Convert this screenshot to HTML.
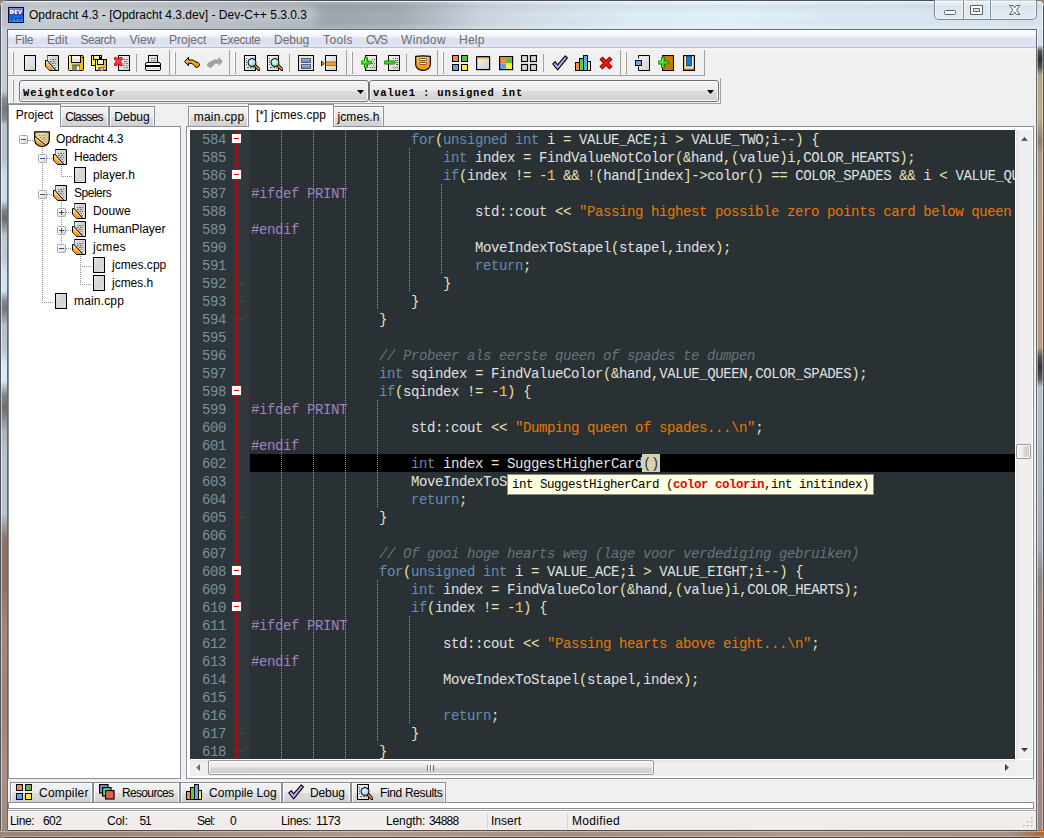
<!DOCTYPE html>
<html><head><meta charset="utf-8"><title>Dev-C++</title>
<style>
*{box-sizing:border-box;margin:0;padding:0}
html,body{width:1044px;height:838px;overflow:hidden}
body{position:relative;font-family:"Liberation Sans",sans-serif;font-size:12px;color:#000;background:#8e8078}
.a{position:absolute}
#frame{position:absolute;left:0;top:0;width:1044px;height:838px;border-radius:7px 7px 6px 6px;overflow:hidden;background:#a3a6aa}
#titlebar{position:absolute;left:0;top:0;width:1044px;height:30px;background:linear-gradient(180deg,rgba(255,255,255,.18) 0,rgba(255,255,255,.05) 3px,rgba(0,0,0,.05) 6px,rgba(0,0,0,0) 14px,rgba(0,0,0,.02) 22px,rgba(255,255,255,.12) 28px),linear-gradient(100deg,#bcc4cc 0%,#b4bcc4 9%,#a8b0b8 22%,#9fa7af 32%,#a4acb4 38%,#b6c0ca 42%,#cbd6e0 46%,#d5e1eb 52%,#dfedf7 61%,#e2f1fa 70%,#dce9f4 80%,#d9e5f0 100%)}
#tglow{left:22px;top:5px;width:296px;height:20px;border-radius:10px;background:rgba(255,255,255,.3);filter:blur(5px)}
#title{left:29px;top:7px;font-size:12px;line-height:16px;white-space:nowrap;color:#000;letter-spacing:0.01px}
#client{position:absolute;left:8px;top:30px;width:1028px;height:800px;background:#f0f0f0}
/* menu */
#menubar{left:0;top:0;width:1028px;height:18px;background:linear-gradient(180deg,#ffffff 0%,#f3f5fa 35%,#dfe3f1 50%,#dbe0ef 75%,#e3e7f4 100%);border-bottom:1px solid #b9bfd0}
#menubar span{position:absolute;top:3px;line-height:15px;color:#6d6d6d;font-size:12px;white-space:nowrap}

.combo{position:absolute;top:50px;width:350px;height:22px;border:1px solid #707070;border-radius:3px;background:linear-gradient(180deg,#f2f2f2 0%,#ebebeb 48%,#dddddd 52%,#cfcfcf 100%);box-shadow:inset 0 0 0 1px #fcfcfc;font-family:"Liberation Mono",monospace;font-weight:bold;font-size:10.500px;letter-spacing:.85px;line-height:21px;padding:2px 0 0 3px;white-space:nowrap;color:#000}
.combo i{position:absolute;right:4px;top:9px;width:7px;height:4px;background:#000;clip-path:polygon(0 0,100% 0,50% 100%)}

/* left */
#lpanel{background:#fff;border:1px solid #8b8f99}
.ltab{position:absolute;top:76px;height:21px;border:1px solid #8b8f99;border-bottom:none;background:linear-gradient(180deg,#f2f2f2 0%,#ebebeb 48%,#dddddd 52%,#cfcfcf 100%);box-shadow:inset 1px 1px 0 #fcfcfc,inset -1px 0 0 #fcfcfc;font-size:12px;line-height:21px;text-align:center;white-space:nowrap;color:#000}
.ltab.act{top:74px;height:23px;background:#fff;box-shadow:none;line-height:21px;z-index:2}
.ti{position:absolute}
.tt{position:absolute;font-size:12px;line-height:16px;white-space:nowrap;color:#000}
.bx{position:absolute;width:9px;height:9px;border:1px solid #a8a8a8;border-radius:1.5px;background:linear-gradient(135deg,#ffffff 0%,#f0f0f0 50%,#d0d0d0 100%)}
.bx b{position:absolute;left:1px;top:3px;width:5px;height:1px;background:#3a4aa0}
.bx u{position:absolute;left:3px;top:1px;width:1px;height:5px;background:#3a4aa0}
.hl{position:absolute;height:1px;background-image:linear-gradient(90deg,#909090 50%,transparent 50%);background-size:2px 1px}
.vl{position:absolute;width:1px;background-image:linear-gradient(180deg,#909090 50%,transparent 50%);background-size:1px 2px}

/* editor */
#epanel{background:#fff;border:1px solid #8b8f99}
.etab{position:absolute;top:76px;height:21px;border:1px solid #8b8f99;border-bottom:none;background:linear-gradient(180deg,#f2f2f2 0%,#ebebeb 48%,#dddddd 52%,#cfcfcf 100%);box-shadow:inset 1px 1px 0 #fcfcfc,inset -1px 0 0 #fcfcfc;font-size:12px;line-height:21px;text-align:center;white-space:nowrap;color:#000}
.etab.act{top:74px;height:23px;background:#fff;box-shadow:none;line-height:21px;z-index:2}
#ed{background:#293134;overflow:hidden;font-family:"Liberation Mono",monospace;font-size:14px;letter-spacing:-0.4px;color:#e0e2e4}
#gut1{position:absolute;left:0;top:0;width:44px;height:100%;background:#2d363b}
#gut2{position:absolute;left:44px;top:0;width:15px;height:100%;background:#31393f}
.cur{position:absolute;left:60px;width:765px;height:18px;background:#000}
.ig{position:absolute;width:1px;background-image:linear-gradient(180deg,#929ca1 50%,transparent 50%);background-size:1px 2px}
.fl{position:absolute;left:46px;top:0;width:1px;height:100%;background:#cc0000}
.fb{position:absolute;left:41px;width:11px;height:11px;border:1px solid #cc0000;background:#fff}
.fb b{position:absolute;left:2px;top:4px;width:5px;height:1px;background:#cc0000}
.ft{position:absolute;left:46px;width:7px;height:1px;background:#cc0000}
.ln{position:absolute;left:0;width:36px;height:18px;line-height:18px;padding-top:1px;text-align:right;color:#7a919c;white-space:pre}
.cl{position:absolute;height:18px;line-height:18px;padding-top:1px;white-space:pre}
.k{color:#678cb1}.s{color:#e8e2b7}.n{color:#ffcd22}.q{color:#ec7600}.c{color:#66747b;font-style:italic}.p{color:#a082bd}
.br{background:#d6d2ae;color:#2a3844;display:inline-block;height:18px;margin:-1px -1px 0 -1px;padding:1px 1px 0 1px;vertical-align:top}
#tip{position:absolute;left:317px;top:344px;width:367px;height:21px;background:#ffffe1;border:1px solid #8c8c84;color:#000;font-size:12.500px;letter-spacing:-0.5px;line-height:20px;padding-left:4px;white-space:pre}
#tip b{color:#f00000;font-weight:bold}

/* scrollbars */
#vs{background:linear-gradient(90deg,#e3e3e3 0%,#eeeeee 20%,#f0f0f0 50%,#efefef 100%)}
#hs{background:linear-gradient(180deg,#e3e3e3 0%,#eeeeee 20%,#f0f0f0 50%,#efefef 100%)}
#vs i,#hs i{position:absolute;width:0;height:0}
.up{left:5px;top:7px;width:7px!important;height:4px!important;background:linear-gradient(180deg,#303030,#707070);clip-path:polygon(50% 0,100% 100%,0 100%)}
.dn{left:5px;bottom:7px;width:7px!important;height:4px!important;background:linear-gradient(180deg,#303030,#707070);clip-path:polygon(0 0,100% 0,50% 100%)}
.lf{left:6px;top:4px;width:4px!important;height:7px!important;background:linear-gradient(90deg,#909090,#606060);clip-path:polygon(100% 0,100% 100%,0 50%)}
.rt{right:6px;top:4px;width:4px!important;height:7px!important;background:linear-gradient(90deg,#303030,#707070);clip-path:polygon(0 0,100% 50%,0 100%)}
.vth{position:absolute;left:0;width:15px;height:15px;border:1px solid #979797;border-radius:2px;background:linear-gradient(90deg,#f6f6f6 0%,#e9e9e9 48%,#d8d8d8 52%,#cdcdcd 100%);box-shadow:inset 0 0 0 1px #fafafa}
.hth{position:absolute;top:0;height:15px;border:1px solid #979797;border-radius:2px;background:linear-gradient(180deg,#f6f6f6 0%,#e9e9e9 48%,#d8d8d8 52%,#cdcdcd 100%);box-shadow:inset 0 0 0 1px #fafafa}
.hth b{position:absolute;left:218px;top:4px;width:7px;height:6px;background:linear-gradient(90deg,#707070 0 1px,#fff 1px 2px,transparent 2px 3px,#707070 3px 4px,#fff 4px 5px,transparent 5px 6px,#707070 6px 7px)}
/* bottom */
.btab{position:absolute;top:752px;height:21px;border:1px solid #8b8f99;border-bottom:none;background:linear-gradient(180deg,#f2f2f2 0%,#ebebeb 48%,#dddddd 52%,#cfcfcf 100%);box-shadow:inset 1px 1px 0 #fcfcfc,inset -1px 0 0 #fcfcfc;font-size:12px;white-space:nowrap}
.btab svg{position:absolute;top:1px;width:16px;height:16px}
.btab span{position:absolute;top:2px;line-height:16px}
#status{background:#f1edec;border-top:1px solid #b0adab;box-shadow:inset 0 1px 0 #fbfafa}
#status span{position:absolute;top:2px;line-height:16px;font-size:12px;white-space:nowrap}
#status i{position:absolute;top:2px;width:1px;height:16px;background:#d6d2d0}

/* frame */
#fl{left:0;top:29px;width:8px;height:809px;background:linear-gradient(180deg,#c4ced8 0px,#c4ced8 62px,#8a8e92 70px,#74787c 80px,#8a8e92 90px,#b8c4ce 96px,#b8c4ce 130px,#c8dcea 145px,#c8dcea 172px,#7a7e82 182px,#6a6e72 190px,#9a9ea2 200px,#bcc8d2 206px,#c0ccd6 230px,#cfe4f2 245px,#cfe4f2 262px,#84888c 272px,#74787c 280px,#9aa0a6 290px,#b4c0ca 296px,#b8c6d0 320px,#d4ecf8 335px,#d4ecf8 352px,#84868a 366px,#70706e 378px,#8a8a8a 390px,#a8b0b8 400px,#b8c4cc 425px,#b8c6ce 485px,#a09a96 498px,#8c766a 510px,#8c766a 560px,#a08a7e 600px,#9a8478 680px,#a89084 740px,#a08a7e 809px);box-shadow:inset 1px 0 0 #50545a,inset 2px 0 0 rgba(255,255,255,.55)}
#fr{left:1036px;top:29px;width:8px;height:809px;background:linear-gradient(180deg,#d4e2ee 0px,#d4e2ee 16px,#50545a 22px,#2a2c30 30px,#50504c 38px,#b8a484 46px,#c0aa88 90px,#907868 112px,#b09680 125px,#b89c84 200px,#b89c84 318px,#5a504c 328px,#383434 338px,#5a5a5c 350px,#b4c0ca 358px,#b0bac4 420px,#a4acb4 520px,#8c8480 550px,#a08678 575px,#a88c7e 700px,#a08678 809px);box-shadow:inset -1px 0 0 #50545a,inset -2px 0 0 rgba(255,255,255,.45),inset 2px 0 0 rgba(255,255,255,.5)}
#fbm{left:0;top:830px;width:1044px;height:8px;background:linear-gradient(180deg,transparent 0,transparent 1px,rgba(255,255,255,.38) 1px,rgba(255,255,255,.38) 2px,transparent 2px,transparent 6px,rgba(255,255,255,.3) 6px,rgba(255,255,255,.3) 7px,#4a4040 7px),linear-gradient(90deg,#9a8478 0%,#a08a7e 12%,#b09a8c 36%,#a48e82 55%,#b09888 75%,#a89084 97%,#a87850 99%,#b06830 100%)}
#capbtn{left:934px;top:0;width:103px;height:20px;border:1px solid #7a8a9a;border-top:none;border-radius:0 0 5px 5px;background:linear-gradient(180deg,rgba(255,255,255,.35),rgba(255,255,255,.12));box-shadow:inset 0 0 0 1px rgba(255,255,255,.55)}
#capbtn i{position:absolute;top:0;width:1px;height:19px;background:#7a8a9a;box-shadow:1px 0 0 rgba(255,255,255,.6),-1px 0 0 rgba(255,255,255,.6)}
/* toolbars */
.tb{position:absolute;top:20px;height:26px;border-right:1px solid #a0a0a0;border-bottom:1px solid #a0a0a0}
.grip{position:absolute;top:2px;width:2px;height:22px;border-right:1px solid #a0a0a0;border-left:1px solid #fff;border-bottom:1px solid #a0a0a0}
.sep{position:absolute;top:4px;width:1px;height:18px;background:#a0a0a0}
.ic{position:absolute;top:25px;width:16px;height:16px}
</style></head><body>
<div id="frame">
<div id="titlebar"></div>
<div id="tglow" class="a"></div>
<div id="title" class="a">Opdracht 4.3 - [Opdracht 4.3.dev] - Dev-C++ 5.3.0.3</div>
<div id="client">
<div id="menubar" class="a">
<span style="left:7px;letter-spacing:-.3px">File</span><span style="left:39px;letter-spacing:.07px">Edit</span><span style="left:72.500px;letter-spacing:-.5px">Search</span><span style="left:121.500px;letter-spacing:.07px">View</span><span style="left:161px">Project</span><span style="left:212px;letter-spacing:-.43px">Execute</span><span style="left:266px;letter-spacing:-.04px">Debug</span><span style="left:315px;letter-spacing:.4px">Tools</span><span style="left:358px;letter-spacing:-1.350px">CVS</span><span style="left:393px;letter-spacing:.38px">Window</span><span style="left:451px;letter-spacing:.24px">Help</span>
</div>

<svg width="0" height="0" style="position:absolute"><defs>
<linearGradient id="gp" x1="0" y1="0" x2="1" y2="1"><stop offset="0" stop-color="#f4f4f4"/><stop offset="1" stop-color="#cfcfcf"/></linearGradient>
<linearGradient id="gy" x1="0" y1="0" x2="1" y2="0"><stop offset="0" stop-color="#fff27a"/><stop offset=".5" stop-color="#ffd800"/><stop offset="1" stop-color="#e8b800"/></linearGradient>
<linearGradient id="gb" x1="0" y1="0" x2="0" y2="1"><stop offset="0" stop-color="#9cc4f8"/><stop offset="1" stop-color="#3f7fe0"/></linearGradient>
<linearGradient id="go" x1="0" y1="0" x2="0" y2="1"><stop offset="0" stop-color="#ffc860"/><stop offset="1" stop-color="#f08a00"/></linearGradient>
<radialGradient id="gl1" cx=".4" cy=".4" r=".7"><stop offset="0" stop-color="#e8f8ff"/><stop offset="1" stop-color="#7cc4e8"/></radialGradient>
<radialGradient id="gl2" cx=".4" cy=".4" r=".7"><stop offset="0" stop-color="#e8fff4"/><stop offset="1" stop-color="#6cd8a8"/></radialGradient>
<linearGradient id="gp2" x1="0" y1="0" x2="1" y2="1"><stop offset="0" stop-color="#e8e8e8"/><stop offset=".5" stop-color="#d4d4d4"/><stop offset="1" stop-color="#e0e0e0"/></linearGradient><linearGradient id="gfo" x1="0" y1="0" x2=".6" y2="1"><stop offset="0" stop-color="#ffdc80"/><stop offset=".5" stop-color="#ffb020"/><stop offset="1" stop-color="#f08800"/></linearGradient><linearGradient id="gp3" x1="0" y1="0" x2="1" y2="1"><stop offset="0" stop-color="#ececec"/><stop offset=".5" stop-color="#cacaca"/><stop offset="1" stop-color="#e0e0e0"/></linearGradient><linearGradient id="gtan" x1="0" y1="0" x2="1" y2="0"><stop offset="0" stop-color="#e0c48c"/><stop offset=".5" stop-color="#f0dcb0"/><stop offset="1" stop-color="#d8b880"/></linearGradient><linearGradient id="gp2" x1="0" y1="0" x2="1" y2="1"><stop offset="0" stop-color="#e8e8e8"/><stop offset=".5" stop-color="#d4d4d4"/><stop offset="1" stop-color="#e0e0e0"/></linearGradient></defs></svg>
<div id="tbline" class="a" style="left:0;top:19px;width:1028px;height:1px;background:#fbfbfb"></div>
<div class="tb" style="left:0;width:162px"><div class="grip" style="left:4px"></div><div class="sep" style="left:128px"></div></div>
<div class="tb" style="left:162px;width:60px"><div class="grip" style="left:4px"></div></div>
<div class="tb" style="left:222px;width:117px"><div class="grip" style="left:4px"></div><div class="sep" style="left:59px"></div></div>
<div class="tb" style="left:339px;width:91px"><div class="grip" style="left:4px"></div><div class="sep" style="left:59px"></div></div>
<div class="tb" style="left:430px;width:183px"><div class="grip" style="left:4px"></div><div class="sep" style="left:105px"></div></div>
<div class="tb" style="left:613px;width:84px"><div class="grip" style="left:4px"></div></div>
<!-- new -->
<svg class="ic" style="left:16px" viewBox="0 0 16 16"><rect x=".5" y=".5" width="11" height="15" fill="url(#gp)" stroke="#000"/></svg>
<!-- open -->
<svg class="ic" style="left:36px" viewBox="0 0 16 16"><path d="M3.500 6V.5H14.500V15.500H11" fill="url(#gp3)" stroke="#000"/><path d="M3.500 .5V6.500L12 15.500H11Z" fill="url(#gp3)"/><path d="M1.500 5.500H3.200L12 15.500H5.500L4.500 14.500L3.500 13.500L2.500 12.500L1.500 11Z" fill="url(#gfo)" stroke="#000" stroke-width="1" stroke-linejoin="miter"/><path d="M2.600 7.200L10 15" stroke="#fff" stroke-width=".8" opacity=".85"/><g fill="#707070"><rect x="6" y="4" width="1" height="1"/><rect x="8" y="4" width="2" height="1"/><rect x="11" y="4" width="1" height="1"/><rect x="6" y="6" width="2" height="1"/><rect x="9" y="6" width="2" height="1"/><rect x="8" y="8" width="2" height="1"/><rect x="11" y="8" width="1" height="1"/><rect x="10" y="10" width="1" height="1"/><rect x="11" y="12" width="1" height="1"/></g></svg>
<!-- save -->
<svg class="ic" style="left:60px" viewBox="0 0 16 16"><rect x=".5" y=".5" width="15" height="15" fill="url(#gy)" stroke="#000" rx="1"/><rect x="3.5" y=".5" width="9" height="7" fill="#e6e6e6" stroke="#000"/><rect x="4" y="1" width="8" height="3" fill="#f4f4f4"/><rect x="4" y="10" width="8" height="5.5" fill="#808080"/><rect x="4" y="9.5" width="8" height="1" fill="#5a5a5a"/><rect x="9" y="11.5" width="2" height="3.5" fill="#fff"/><rect x="14" y="2" width="1" height="1" fill="#000"/></svg>
<!-- save all -->
<svg class="ic" style="left:83px" viewBox="0 0 16 16"><rect x=".5" y=".5" width="10" height="10" fill="url(#gy)" stroke="#000"/><rect x="2.5" y=".5" width="6" height="4" fill="#e6e6e6" stroke="#000"/><rect x="4.5" y="4.5" width="11" height="11" fill="url(#gy)" stroke="#000"/><rect x="6.5" y="4.5" width="6" height="5" fill="#ececec" stroke="#000"/><rect x="7" y="12" width="6" height="3.5" fill="#808080"/><rect x="10" y="13" width="2" height="2.5" fill="#c8c8c8"/><rect x="8" y="2" width="2" height="2.5" fill="#000"/></svg>
<!-- close -->
<svg class="ic" style="left:106px" viewBox="0 0 16 16"><rect x="4.500" y=".5" width="11" height="15" fill="url(#gp)" stroke="#000"/><g fill="#777"><rect x="9" y="4" width="2" height="1"/><rect x="12" y="4" width="2" height="1"/><rect x="10" y="6" width="3" height="1"/><rect x="10" y="8" width="1" height="1"/><rect x="12" y="8" width="2" height="1"/><rect x="9" y="10" width="2" height="1"/><rect x="12" y="10" width="1" height="1"/><rect x="10" y="12" width="1" height="1"/><rect x="12" y="12" width="2" height="1"/></g><path d="M1.500 3.500L7 9.500M7 3.500L1.500 9.500" stroke="#e81010" stroke-width="3.400" stroke-linecap="round"/><path d="M1.800 3.800L6.700 9.200M6.700 3.800L1.800 9.200" stroke="#ff5858" stroke-width="1.200" stroke-linecap="round"/></svg>
<!-- print -->
<svg class="ic" style="left:137px" viewBox="0 0 16 16"><rect x="3.500" y=".5" width="9" height="7" fill="url(#gp)" stroke="#000"/><g fill="#777"><rect x="6" y="3" width="2" height="1"/><rect x="9" y="3" width="2" height="1"/><rect x="6" y="5" width="1" height="1"/><rect x="8" y="5" width="2" height="1"/></g><rect x=".500" y="7.500" width="15" height="8" rx="1.500" fill="#fff" stroke="#000"/><rect x="1" y="10" width="14" height="2" fill="#000"/><rect x="2" y="13" width="12" height="1" fill="#d0d0d0"/></svg>
<!-- undo -->
<svg class="ic" style="left:176px" viewBox="0 0 16 16"><path d="M.6 6.500L4.500 2.200V5H9L11 6.500L14 7.500L15.600 9V10.500L13.500 12.300H12L9.500 10L8 8.300H4.500V10.800Z" fill="url(#go)" stroke="#000" stroke-width="1" stroke-linejoin="round"/></svg>
<!-- redo -->
<svg class="ic" style="left:199px" viewBox="0 0 16 16"><path d="M15.800 6.500L11.500 1.700V4.600H7L5 6L2 7L0 9V10.800L2.500 12.800H4.300L6.800 10.300L8 8.700H11.500V11.300Z" fill="#a2a2a2"/></svg>
<!-- find -->
<svg class="ic" style="left:236px" viewBox="0 0 16 16"><rect x=".5" y=".5" width="11" height="15" fill="url(#gp)" stroke="#000"/><g fill="#666"><rect x="2" y="3" width="1" height="1"/><rect x="2" y="5" width="1" height="1"/><rect x="2" y="7" width="1" height="1"/><rect x="2" y="9" width="1" height="1"/><rect x="3" y="12" width="2" height="1"/><rect x="6" y="12" width="2" height="1"/><rect x="9" y="12" width="1" height="1"/></g><path d="M11 10.500L15 14.500" stroke="#000" stroke-width="3.200" stroke-linecap="round"/><path d="M11.200 10.700L14.800 14.300" stroke="#f0a030" stroke-width="1.600" stroke-linecap="round"/><circle cx="8" cy="7.500" r="4" fill="url(#gl1)" stroke="#000"/></svg>
<!-- replace -->
<svg class="ic" style="left:259px" viewBox="0 0 16 16"><rect x=".5" y=".5" width="11" height="15" fill="url(#gp)" stroke="#000"/><g fill="#666"><rect x="2" y="3" width="1" height="1"/><rect x="2" y="5" width="1" height="1"/><rect x="2" y="7" width="1" height="1"/><rect x="2" y="9" width="1" height="1"/><rect x="3" y="12" width="2" height="1"/><rect x="6" y="12" width="2" height="1"/><rect x="9" y="12" width="1" height="1"/></g><path d="M11 10.500L15 14.500" stroke="#000" stroke-width="3.200" stroke-linecap="round"/><path d="M11.200 10.700L14.800 14.300" stroke="#f0a030" stroke-width="1.600" stroke-linecap="round"/><circle cx="8" cy="7.500" r="4" fill="url(#gl2)" stroke="#000"/></svg>
<!-- toggle -->
<svg class="ic" style="left:290px" viewBox="0 0 16 16"><rect x=".5" y=".5" width="15" height="15" fill="#e4e4e4" stroke="#000"/><rect x="3.500" y="3.500" width="9" height="4" fill="url(#gb)" stroke="#606060"/><rect x="3.500" y="9.500" width="9" height="4" fill="url(#gb)" stroke="#606060"/></svg>
<!-- goto -->
<svg class="ic" style="left:313px" viewBox="0 0 16 16"><rect x="4.500" y=".5" width="11" height="15" fill="url(#gp)" stroke="#000"/><rect x="5" y="7" width="10" height="3" fill="#f0a010"/><rect x="5" y="6.500" width="10" height=".7" fill="#7a5200"/><rect x="5" y="10" width="10" height=".7" fill="#7a5200"/><path d="M.5 6L3.200 8.500L.5 11Z" fill="#f0a010" stroke="#000" stroke-width=".8"/></svg>
<!-- add -->
<svg class="ic" style="left:353px" viewBox="0 0 16 16"><rect x="4.500" y=".5" width="11" height="15" fill="url(#gp)" stroke="#000"/><g fill="#666"><rect x="11" y="4" width="1" height="1"/><rect x="13" y="4" width="1" height="1"/><rect x="12" y="6" width="1" height="1"/><rect x="11" y="8" width="1" height="1"/><rect x="13" y="8" width="1" height="1"/><rect x="12" y="10" width="1" height="1"/><rect x="9" y="12" width="1" height="1"/><rect x="11" y="12" width="1" height="1"/><rect x="13" y="12" width="1" height="1"/></g><path d="M5 3.500V11.500M1 7.500H9" stroke="#1a6a00" stroke-width="4" stroke-linecap="round"/><path d="M5 3.500V11.500M1 7.500H9" stroke="#38d818" stroke-width="2.400" stroke-linecap="round"/><path d="M4.500 4V7H2" stroke="#b8ffa0" stroke-width=".8" fill="none"/></svg>
<!-- remove -->
<svg class="ic" style="left:376px" viewBox="0 0 16 16"><rect x="4.500" y=".5" width="11" height="15" fill="url(#gp)" stroke="#000"/><g fill="#666"><rect x="9" y="3" width="1" height="1"/><rect x="11" y="3" width="1" height="1"/><rect x="13" y="3" width="1" height="1"/><rect x="11" y="5" width="3" height="1"/><rect x="12" y="7" width="2" height="1"/><rect x="12" y="9" width="2" height="1"/><rect x="9" y="12" width="1" height="1"/><rect x="11" y="12" width="1" height="1"/><rect x="13" y="12" width="1" height="1"/></g><path d="M1.500 7.500H9.500" stroke="#1a6a00" stroke-width="4" stroke-linecap="round"/><path d="M1.500 7.500H9.500" stroke="#38d818" stroke-width="2.400" stroke-linecap="round"/></svg>
<!-- orange shield -->
<svg class="ic" style="left:407px" viewBox="0 0 16 16"><path d="M.7 1.400Q8 .2 15.300 1.400V9.500C15.300 13 12 15.400 8 15.400C4 15.400 .7 13 .7 9.500Z" fill="url(#go)" stroke="#000" stroke-width="1.200"/><rect x="4.500" y="3.500" width="7" height="2" rx="1" fill="#fff" stroke="#3a2400" stroke-width=".7"/><rect x="4.500" y="7.500" width="7" height="2" rx="1" fill="#fff" stroke="#3a2400" stroke-width=".7"/></svg>
<!-- compile -->
<svg class="ic" style="left:444px" viewBox="0 0 16 16"><rect x=".5" y=".5" width="6" height="6" fill="#f88840" stroke="#000"/><rect x="9.500" y=".5" width="6" height="6" fill="#58c040" stroke="#000"/><rect x=".5" y="9.500" width="6" height="6" fill="#58a0f0" stroke="#000"/><rect x="9.500" y="9.500" width="6" height="6" fill="#f8f040" stroke="#000"/></svg>
<!-- run -->
<svg class="ic" style="left:468px" viewBox="0 0 16 16"><rect x=".6" y="1.600" width="13" height="13" fill="url(#gp)" stroke="#000" stroke-width="1.200"/><rect x="1" y="2" width="12" height="1.500" fill="#f09000"/></svg>
<!-- compile+run -->
<svg class="ic" style="left:491px" viewBox="0 0 16 16"><rect x="1" y="3" width="6" height="5.500" fill="#f88840"/><rect x="7" y="3" width="6" height="5.500" fill="#58c040"/><rect x="1" y="8.500" width="6" height="5.500" fill="#58a0f0"/><rect x="7" y="8.500" width="6" height="5.500" fill="#f8f040"/><rect x=".6" y="1.600" width="13" height="13" fill="none" stroke="#000" stroke-width="1.200"/><rect x="1" y="2" width="12" height="1.500" fill="#f09000"/></svg>
<!-- rebuild -->
<svg class="ic" style="left:513px" viewBox="0 0 16 16"><rect x=".5" y=".5" width="6" height="6" fill="#d8d8d8" stroke="#000" stroke-width="1.200"/><rect x="9.500" y=".5" width="6" height="6" fill="#d8d8d8" stroke="#000" stroke-width="1.200"/><rect x=".5" y="9.500" width="6" height="6" fill="#d8d8d8" stroke="#000" stroke-width="1.200"/><rect x="9.500" y="9.500" width="6" height="6" fill="#d8d8d8" stroke="#000" stroke-width="1.200"/></svg>
<!-- check -->
<svg class="ic" style="left:544px" viewBox="0 0 16 16"><path d="M.8 9L3.200 6.600L5.600 9.800L13.300 .8L15.400 2.800L5.700 14.800Z" fill="#c8a0ff" stroke="#000" stroke-width="1.100" stroke-linejoin="round"/></svg>
<!-- bars -->
<svg class="ic" style="left:567px" viewBox="0 0 16 16"><rect x=".5" y="7.500" width="4" height="8" fill="#f89040" stroke="#000"/><rect x="4.500" y="3.500" width="4" height="12" fill="#60c848" stroke="#000"/><rect x="8.500" y=".5" width="4" height="15" fill="#60a8f8" stroke="#000"/><rect x="12.500" y="6.500" width="3" height="9" fill="#f8f050" stroke="#000"/></svg>
<!-- red x -->
<svg class="ic" style="left:590px" viewBox="0 0 16 16"><path d="M4.500 4.500L11.500 11.500M11.500 4.500L4.500 11.500" stroke="#600000" stroke-width="4.400" stroke-linecap="square"/><path d="M4.500 4.500L11.500 11.500M11.500 4.500L4.500 11.500" stroke="#f01010" stroke-width="3" stroke-linecap="square"/></svg>
<!-- goto func -->
<svg class="ic" style="left:627px" viewBox="0 0 16 16"><path d="M3.500 3.500V.5H14.500V15.500H3.500V11.500" fill="url(#gp)" stroke="#000"/><rect x=".5" y="5.500" width="6" height="5" fill="#68a8f0" stroke="#000"/></svg>
<!-- add watch -->
<svg class="ic" style="left:650px" viewBox="0 0 16 16"><rect x="4.500" y=".5" width="11" height="15" fill="#c87808" stroke="#000"/><path d="M5 3.500V11.500M1 7.500H9" stroke="#1a6a00" stroke-width="4" stroke-linecap="round"/><path d="M5 3.500V11.500M1 7.500H9" stroke="#38d818" stroke-width="2.400" stroke-linecap="round"/><path d="M4.500 4V7H2" stroke="#b8ffa0" stroke-width=".8" fill="none"/></svg>
<!-- bookmark -->
<svg class="ic" style="left:675px" viewBox="0 0 16 16"><rect x=".5" y=".5" width="11" height="15" fill="#c87808" stroke="#000"/><path d="M1.500 1.500H10.500V13.500H1.500Z" fill="#f0f0f0"/><rect x="3.500" y="1" width="5" height="10" fill="#1878c8" stroke="#0a3a78" stroke-width=".8"/></svg>


<div class="a" style="left:0;top:73px;width:713px;height:1px;background:#a0a0a0"></div>
<div class="a" style="left:712px;top:48px;width:1px;height:26px;background:#a0a0a0"></div>
<div class="grip" style="left:4px;top:50px;height:22px"></div>
<div class="combo" style="left:11px">WeightedColor<i></i></div>
<div class="combo" style="left:361px">value1 : unsigned int<i></i></div>

<div class="ltab" style="left:52px;width:49px;letter-spacing:-.73px;padding-right:1px">Classes</div>
<div class="ltab" style="left:101px;width:46px">Debug</div>
<div id="lpanel" class="a" style="left:0px;top:96px;width:173px;height:653px"></div>
<div class="ltab act" style="left:0px;width:53px">Project</div>
<div class="bx" style="left:11px;top:105px"><b></b></div>
<div class="hl" style="left:20px;top:110px;width:6px"></div>
<svg class="ti" style="left:26px;top:101px" width="16" height="16" viewBox="0 0 16 16"><path d="M.7 .8H15.300V9C15.300 12.500 12 15.300 8 15.300C4 15.300 .7 12.500 .7 9Z" fill="url(#gtan)" stroke="#000" stroke-width="1.200" stroke-linejoin="round"/><path d="M1.200 6L11 14Q8 15.300 5 14Q1.500 12 1.200 6Z" fill="url(#gfo)"/><path d="M1 5.500L11.500 14" stroke="#000" stroke-width="1"/><path d="M1.500 7.500L10 14.300" stroke="#fff" stroke-width=".7" opacity=".85"/><g fill="#a08860"><rect x="5" y="4" width="1" height="1"/><rect x="7" y="4" width="2" height="1"/><rect x="10" y="4" width="1" height="1"/><rect x="6" y="6" width="2" height="1"/><rect x="9" y="6" width="2" height="1"/><rect x="8" y="8" width="2" height="1"/><rect x="11" y="8" width="1" height="1"/><rect x="10" y="10" width="1" height="1"/></g></svg>
<div class="tt" style="left:48.0px;top:101px;letter-spacing:-0.18px">Opdracht 4.3</div>
<div class="vl" style="left:34px;top:118px;height:154px"></div>
<div class="bx" style="left:30px;top:124px"><b></b></div>
<div class="hl" style="left:39px;top:128px;width:6px"></div>
<svg class="ti" style="left:44px;top:119px" width="16" height="16" viewBox="0 0 16 16"><path d="M3.500 6V.5H14.500V15.500H11" fill="url(#gp3)" stroke="#000"/><path d="M3.500 .5V6.500L12 15.500H11Z" fill="url(#gp3)"/><path d="M1.500 5.500H3.200L12 15.500H5.500L4.500 14.500L3.500 13.500L2.500 12.500L1.500 11Z" fill="url(#gfo)" stroke="#000" stroke-width="1" stroke-linejoin="miter"/><path d="M2.600 7.200L10 15" stroke="#fff" stroke-width=".8" opacity=".85"/><g fill="#707070"><rect x="6" y="4" width="1" height="1"/><rect x="8" y="4" width="2" height="1"/><rect x="11" y="4" width="1" height="1"/><rect x="6" y="6" width="2" height="1"/><rect x="9" y="6" width="2" height="1"/><rect x="8" y="8" width="2" height="1"/><rect x="11" y="8" width="1" height="1"/><rect x="10" y="10" width="1" height="1"/><rect x="11" y="12" width="1" height="1"/></g></svg>
<div class="tt" style="left:66.0px;top:119px;letter-spacing:-0.29px">Headers</div>
<div class="vl" style="left:53px;top:136px;height:10px"></div>
<div class="hl" style="left:53px;top:146px;width:12px"></div>
<svg class="ti" style="left:66px;top:137px" width="12" height="16" viewBox="0 0 12 16"><rect x=".5" y=".5" width="11" height="15" fill="url(#gp2)" stroke="#000"/></svg>
<div class="tt" style="left:85.0px;top:137px;letter-spacing:-0.02px">player.h</div>
<div class="bx" style="left:30px;top:160px"><b></b></div>
<div class="hl" style="left:39px;top:164px;width:6px"></div>
<svg class="ti" style="left:44px;top:155px" width="16" height="16" viewBox="0 0 16 16"><path d="M3.500 6V.5H14.500V15.500H11" fill="url(#gp3)" stroke="#000"/><path d="M3.500 .5V6.500L12 15.500H11Z" fill="url(#gp3)"/><path d="M1.500 5.500H3.200L12 15.500H5.500L4.500 14.500L3.500 13.500L2.500 12.500L1.500 11Z" fill="url(#gfo)" stroke="#000" stroke-width="1" stroke-linejoin="miter"/><path d="M2.600 7.200L10 15" stroke="#fff" stroke-width=".8" opacity=".85"/><g fill="#707070"><rect x="6" y="4" width="1" height="1"/><rect x="8" y="4" width="2" height="1"/><rect x="11" y="4" width="1" height="1"/><rect x="6" y="6" width="2" height="1"/><rect x="9" y="6" width="2" height="1"/><rect x="8" y="8" width="2" height="1"/><rect x="11" y="8" width="1" height="1"/><rect x="10" y="10" width="1" height="1"/><rect x="11" y="12" width="1" height="1"/></g></svg>
<div class="tt" style="left:66.0px;top:155px;letter-spacing:-0.48px">Spelers</div>
<div class="vl" style="left:53px;top:172px;height:42px"></div>
<div class="bx" style="left:49px;top:178px"><b></b><u></u></div>
<div class="hl" style="left:58px;top:182px;width:6px"></div>
<svg class="ti" style="left:63px;top:173px" width="16" height="16" viewBox="0 0 16 16"><path d="M3.500 6V.5H14.500V15.500H11" fill="url(#gp3)" stroke="#000"/><path d="M3.500 .5V6.500L12 15.500H11Z" fill="url(#gp3)"/><path d="M1.500 5.500H3.200L12 15.500H5.500L4.500 14.500L3.500 13.500L2.500 12.500L1.500 11Z" fill="url(#gfo)" stroke="#000" stroke-width="1" stroke-linejoin="miter"/><path d="M2.600 7.200L10 15" stroke="#fff" stroke-width=".8" opacity=".85"/><g fill="#707070"><rect x="6" y="4" width="1" height="1"/><rect x="8" y="4" width="2" height="1"/><rect x="11" y="4" width="1" height="1"/><rect x="6" y="6" width="2" height="1"/><rect x="9" y="6" width="2" height="1"/><rect x="8" y="8" width="2" height="1"/><rect x="11" y="8" width="1" height="1"/><rect x="10" y="10" width="1" height="1"/><rect x="11" y="12" width="1" height="1"/></g></svg>
<div class="tt" style="left:85.0px;top:173px;letter-spacing:0.06px">Douwe</div>
<div class="bx" style="left:49px;top:196px"><b></b><u></u></div>
<div class="hl" style="left:58px;top:200px;width:6px"></div>
<svg class="ti" style="left:63px;top:191px" width="16" height="16" viewBox="0 0 16 16"><path d="M3.500 6V.5H14.500V15.500H11" fill="url(#gp3)" stroke="#000"/><path d="M3.500 .5V6.500L12 15.500H11Z" fill="url(#gp3)"/><path d="M1.500 5.500H3.200L12 15.500H5.500L4.500 14.500L3.500 13.500L2.500 12.500L1.500 11Z" fill="url(#gfo)" stroke="#000" stroke-width="1" stroke-linejoin="miter"/><path d="M2.600 7.200L10 15" stroke="#fff" stroke-width=".8" opacity=".85"/><g fill="#707070"><rect x="6" y="4" width="1" height="1"/><rect x="8" y="4" width="2" height="1"/><rect x="11" y="4" width="1" height="1"/><rect x="6" y="6" width="2" height="1"/><rect x="9" y="6" width="2" height="1"/><rect x="8" y="8" width="2" height="1"/><rect x="11" y="8" width="1" height="1"/><rect x="10" y="10" width="1" height="1"/><rect x="11" y="12" width="1" height="1"/></g></svg>
<div class="tt" style="left:85.0px;top:191px;letter-spacing:-0.02px">HumanPlayer</div>
<div class="bx" style="left:49px;top:214px"><b></b></div>
<div class="hl" style="left:58px;top:218px;width:6px"></div>
<svg class="ti" style="left:63px;top:209px" width="16" height="16" viewBox="0 0 16 16"><path d="M3.500 6V.5H14.500V15.500H11" fill="url(#gp3)" stroke="#000"/><path d="M3.500 .5V6.500L12 15.500H11Z" fill="url(#gp3)"/><path d="M1.500 5.500H3.200L12 15.500H5.500L4.500 14.500L3.500 13.500L2.500 12.500L1.500 11Z" fill="url(#gfo)" stroke="#000" stroke-width="1" stroke-linejoin="miter"/><path d="M2.600 7.200L10 15" stroke="#fff" stroke-width=".8" opacity=".85"/><g fill="#707070"><rect x="6" y="4" width="1" height="1"/><rect x="8" y="4" width="2" height="1"/><rect x="11" y="4" width="1" height="1"/><rect x="6" y="6" width="2" height="1"/><rect x="9" y="6" width="2" height="1"/><rect x="8" y="8" width="2" height="1"/><rect x="11" y="8" width="1" height="1"/><rect x="10" y="10" width="1" height="1"/><rect x="11" y="12" width="1" height="1"/></g></svg>
<div class="tt" style="left:85.0px;top:209px;letter-spacing:0.34px">jcmes</div>
<div class="vl" style="left:72px;top:226px;height:28px"></div>
<div class="hl" style="left:72px;top:236px;width:12px"></div>
<svg class="ti" style="left:85px;top:227px" width="12" height="16" viewBox="0 0 12 16"><rect x=".5" y=".5" width="11" height="15" fill="url(#gp2)" stroke="#000"/></svg>
<div class="tt" style="left:104.0px;top:227px;letter-spacing:0.03px">jcmes.cpp</div>
<div class="hl" style="left:72px;top:254px;width:12px"></div>
<svg class="ti" style="left:85px;top:245px" width="12" height="16" viewBox="0 0 12 16"><rect x=".5" y=".5" width="11" height="15" fill="url(#gp2)" stroke="#000"/></svg>
<div class="tt" style="left:104.0px;top:245px;letter-spacing:-0.02px">jcmes.h</div>
<div class="hl" style="left:34px;top:272px;width:12px"></div>
<svg class="ti" style="left:47px;top:263px" width="12" height="16" viewBox="0 0 12 16"><rect x=".5" y=".5" width="11" height="15" fill="url(#gp2)" stroke="#000"/></svg>
<div class="tt" style="left:66.0px;top:263px;letter-spacing:0.16px">main.cpp</div>

<div class="etab" style="left:180px;width:61px;letter-spacing:.24px;padding-left:1px">main.cpp</div>
<div class="etab" style="left:325px;width:51px;letter-spacing:.09px">jcmes.h</div>
<div id="epanel" class="a" style="left:178px;top:96px;width:848px;height:653px"></div>
<div class="etab act" style="left:240px;width:86px;letter-spacing:.12px">[*] jcmes.cpp</div>

<div id="ed" class="a" style="left:182px;top:100px;width:825px;height:629px">
<div id="gut1"></div><div id="gut2"></div>
<div class="cur" style="top:324px"></div>
<div class="ig" style="left:91px;top:0px;height:630px"></div>
<div class="ig" style="left:123px;top:0px;height:630px"></div>
<div class="ig" style="left:155px;top:0px;height:630px"></div>
<div class="ig" style="left:187px;top:0px;height:180px"></div>
<div class="ig" style="left:219px;top:18px;height:144px"></div>
<div class="ig" style="left:251px;top:54px;height:90px"></div>
<div class="ig" style="left:187px;top:270px;height:108px"></div>
<div class="ig" style="left:187px;top:450px;height:162px"></div>
<div class="ig" style="left:219px;top:486px;height:108px"></div>
<div class="fl"></div>
<div class="fb" style="top:3px"><b></b></div>
<div class="fb" style="top:39px"><b></b></div>
<div class="fb" style="top:255px"><b></b></div>
<div class="fb" style="top:435px"><b></b></div>
<div class="fb" style="top:471px"><b></b></div>
<div class="ft" style="top:153px"></div>
<div class="ft" style="top:171px"></div>
<div class="ft" style="top:189px"></div>
<div class="ft" style="top:387px"></div>
<div class="ft" style="top:603px"></div>
<div class="ft" style="top:621px"></div>
<div class="ln" style="top:0px">584</div>
<div class="cl" style="top:0px;left:221px"><span class="k">for</span><span class="s">(</span><span class="k">unsigned</span> <span class="k">int</span> i <span class="s">=</span> VALUE_ACE<span class="s">;</span>i <span class="s">&gt;</span> VALUE_TWO<span class="s">;</span>i<span class="s">--)</span> <span class="s">{</span></div>
<div class="ln" style="top:18px">585</div>
<div class="cl" style="top:18px;left:253px"><span class="k">int</span> index <span class="s">=</span> FindValueNotColor<span class="s">(&amp;</span>hand<span class="s">,(</span>value<span class="s">)</span>i<span class="s">,</span>COLOR_HEARTS<span class="s">);</span></div>
<div class="ln" style="top:36px">586</div>
<div class="cl" style="top:36px;left:253px"><span class="k">if</span><span class="s">(</span>index <span class="s">!=</span> <span class="s">-</span><span class="n">1</span> <span class="s">&amp;&amp;</span> <span class="s">!(</span>hand<span class="s">[</span>index<span class="s">]-&gt;</span>color<span class="s">()</span> <span class="s">==</span> COLOR_SPADES <span class="s">&amp;&amp;</span> i <span class="s">&lt;</span> VALUE_QUEEN<span class="s">)</span> <span class="s">{</span></div>
<div class="ln" style="top:54px">587</div>
<div class="cl" style="top:54px;left:61px"><span class="p">#ifdef PRINT</span></div>
<div class="ln" style="top:72px">588</div>
<div class="cl" style="top:72px;left:285px">std<span class="s">::</span>cout <span class="s">&lt;&lt;</span> <span class="q">&quot;Passing highest possible zero points card below queen of spades...\n&quot;</span><span class="s">;</span></div>
<div class="ln" style="top:90px">589</div>
<div class="cl" style="top:90px;left:61px"><span class="p">#endif</span></div>
<div class="ln" style="top:108px">590</div>
<div class="cl" style="top:108px;left:285px">MoveIndexToStapel<span class="s">(</span>stapel<span class="s">,</span>index<span class="s">);</span></div>
<div class="ln" style="top:126px">591</div>
<div class="cl" style="top:126px;left:285px"><span class="k">return</span><span class="s">;</span></div>
<div class="ln" style="top:144px">592</div>
<div class="cl" style="top:144px;left:253px"><span class="s">}</span></div>
<div class="ln" style="top:162px">593</div>
<div class="cl" style="top:162px;left:221px"><span class="s">}</span></div>
<div class="ln" style="top:180px">594</div>
<div class="cl" style="top:180px;left:189px"><span class="s">}</span></div>
<div class="ln" style="top:198px">595</div>
<div class="ln" style="top:216px">596</div>
<div class="cl" style="top:216px;left:189px"><span class="c">// Probeer als eerste queen of spades te dumpen</span></div>
<div class="ln" style="top:234px">597</div>
<div class="cl" style="top:234px;left:189px"><span class="k">int</span> sqindex <span class="s">=</span> FindValueColor<span class="s">(&amp;</span>hand<span class="s">,</span>VALUE_QUEEN<span class="s">,</span>COLOR_SPADES<span class="s">);</span></div>
<div class="ln" style="top:252px">598</div>
<div class="cl" style="top:252px;left:189px"><span class="k">if</span><span class="s">(</span>sqindex <span class="s">!=</span> <span class="s">-</span><span class="n">1</span><span class="s">)</span> <span class="s">{</span></div>
<div class="ln" style="top:270px">599</div>
<div class="cl" style="top:270px;left:61px"><span class="p">#ifdef PRINT</span></div>
<div class="ln" style="top:288px">600</div>
<div class="cl" style="top:288px;left:221px">std<span class="s">::</span>cout <span class="s">&lt;&lt;</span> <span class="q">&quot;Dumping queen of spades...\n&quot;</span><span class="s">;</span></div>
<div class="ln" style="top:306px">601</div>
<div class="cl" style="top:306px;left:61px"><span class="p">#endif</span></div>
<div class="ln" style="top:324px">602</div>
<div class="cl" style="top:324px;left:221px"><span class="k">int</span> index <span class="s">=</span> SuggestHigherCard<span class="br">()</span></div>
<div class="ln" style="top:342px">603</div>
<div class="cl" style="top:342px;left:221px">MoveIndexToStapel<span class="s">(</span>stapel<span class="s">,</span>index<span class="s">);</span></div>
<div class="ln" style="top:360px">604</div>
<div class="cl" style="top:360px;left:221px"><span class="k">return</span><span class="s">;</span></div>
<div class="ln" style="top:378px">605</div>
<div class="cl" style="top:378px;left:189px"><span class="s">}</span></div>
<div class="ln" style="top:396px">606</div>
<div class="ln" style="top:414px">607</div>
<div class="cl" style="top:414px;left:189px"><span class="c">// Of gooi hoge hearts weg (lage voor verdediging gebruiken)</span></div>
<div class="ln" style="top:432px">608</div>
<div class="cl" style="top:432px;left:189px"><span class="k">for</span><span class="s">(</span><span class="k">unsigned</span> <span class="k">int</span> i <span class="s">=</span> VALUE_ACE<span class="s">;</span>i <span class="s">&gt;</span> VALUE_EIGHT<span class="s">;</span>i<span class="s">--)</span> <span class="s">{</span></div>
<div class="ln" style="top:450px">609</div>
<div class="cl" style="top:450px;left:221px"><span class="k">int</span> index <span class="s">=</span> FindValueColor<span class="s">(&amp;</span>hand<span class="s">,(</span>value<span class="s">)</span>i<span class="s">,</span>COLOR_HEARTS<span class="s">);</span></div>
<div class="ln" style="top:468px">610</div>
<div class="cl" style="top:468px;left:221px"><span class="k">if</span><span class="s">(</span>index <span class="s">!=</span> <span class="s">-</span><span class="n">1</span><span class="s">)</span> <span class="s">{</span></div>
<div class="ln" style="top:486px">611</div>
<div class="cl" style="top:486px;left:61px"><span class="p">#ifdef PRINT</span></div>
<div class="ln" style="top:504px">612</div>
<div class="cl" style="top:504px;left:253px">std<span class="s">::</span>cout <span class="s">&lt;&lt;</span> <span class="q">&quot;Passing hearts above eight...\n&quot;</span><span class="s">;</span></div>
<div class="ln" style="top:522px">613</div>
<div class="cl" style="top:522px;left:61px"><span class="p">#endif</span></div>
<div class="ln" style="top:540px">614</div>
<div class="cl" style="top:540px;left:253px">MoveIndexToStapel<span class="s">(</span>stapel<span class="s">,</span>index<span class="s">);</span></div>
<div class="ln" style="top:558px">615</div>
<div class="ln" style="top:576px">616</div>
<div class="cl" style="top:576px;left:253px"><span class="k">return</span><span class="s">;</span></div>
<div class="ln" style="top:594px">617</div>
<div class="cl" style="top:594px;left:221px"><span class="s">}</span></div>
<div class="ln" style="top:612px">618</div>
<div class="cl" style="top:612px;left:189px"><span class="s">}</span></div>
<div id="tip">int SuggestHigherCard (<b>color colorin</b>,int initindex)</div>
</div>

<!-- scrollbars (inside epanel, client coords) -->
<div id="vs" class="a" style="left:1008px;top:100px;width:16px;height:629px"><i class="up"></i><i class="dn"></i><div class="vth" style="top:314px"></div></div>
<div id="hs" class="a" style="left:182px;top:730px;width:825px;height:16px"><i class="lf"></i><i class="rt"></i><div class="hth" style="left:18px;width:446px"><b></b></div></div>
<div class="a" style="left:1007px;top:730px;width:18px;height:16px;background:#f0f0f0"></div>
<!-- bottom tabs -->
<div class="btab" style="left:2px;width:83px"><svg style="left:5px" viewBox="0 0 16 16"><rect x=".5" y=".5" width="6" height="6" fill="#f88840" stroke="#000"/><rect x="9.500" y=".5" width="6" height="6" fill="#58c040" stroke="#000"/><rect x=".5" y="9.500" width="6" height="6" fill="#58a0f0" stroke="#000"/><rect x="9.500" y="9.500" width="6" height="6" fill="#f8f040" stroke="#000"/></svg><span style="left:28px;letter-spacing:.21px">Compiler</span></div>
<div class="btab" style="left:85px;width:87px"><svg style="left:5px" viewBox="0 0 16 16"><rect x=".6" y=".6" width="8.400" height="8.400" fill="#8888f4" stroke="#000" stroke-width="1.200"/><rect x="3.600" y="3.600" width="8.400" height="8.400" fill="#48e088" stroke="#000" stroke-width="1.200"/><rect x="6.600" y="6.600" width="8.400" height="8.400" fill="#f85858" stroke="#000" stroke-width="1.200"/><rect x="7.200" y="7.200" width="4.200" height="4.200" fill="#d06830"/></svg><span style="left:28px;letter-spacing:-.66px">Resources</span></div>
<div class="btab" style="left:172px;width:102px"><svg style="left:5px" viewBox="0 0 16 16"><rect x=".5" y="7.500" width="4" height="8" fill="#f89040" stroke="#000"/><rect x="4.500" y="3.500" width="4" height="12" fill="#60c848" stroke="#000"/><rect x="8.500" y=".5" width="4" height="15" fill="#60a8f8" stroke="#000"/><rect x="12.500" y="6.500" width="3" height="9" fill="#f8f050" stroke="#000"/></svg><span style="left:28px;letter-spacing:.03px">Compile Log</span></div>
<div class="btab" style="left:274px;width:69px"><svg style="left:5px" viewBox="0 0 16 16"><path d="M.8 9L3.200 6.600L5.600 9.800L13.300 .8L15.400 2.800L5.700 14.800Z" fill="#c8a0ff" stroke="#000" stroke-width="1.100" stroke-linejoin="round"/></svg><span style="left:27px;letter-spacing:-.11px">Debug</span></div>
<div class="btab" style="left:343px;width:95px"><svg style="left:5px" viewBox="0 0 16 16"><rect x=".5" y=".5" width="11" height="15" fill="url(#gp)" stroke="#000"/><g fill="#666"><rect x="2" y="3" width="1" height="1"/><rect x="2" y="5" width="1" height="1"/><rect x="2" y="7" width="1" height="1"/><rect x="2" y="9" width="1" height="1"/><rect x="3" y="12" width="2" height="1"/><rect x="6" y="12" width="2" height="1"/><rect x="9" y="12" width="1" height="1"/></g><path d="M11 10.500L15 14.500" stroke="#000" stroke-width="3.200" stroke-linecap="round"/><path d="M11.200 10.700L14.800 14.300" stroke="#f0a030" stroke-width="1.600" stroke-linecap="round"/><circle cx="8" cy="7.500" r="4" fill="url(#gl1)" stroke="#000"/></svg><span style="left:28px;letter-spacing:-.35px">Find Results</span></div>
<div class="a" style="left:0;top:772px;width:1026px;height:7px;background:#fff;border:1px solid #8b8f99"></div>
<!-- status -->
<div id="status" class="a" style="left:0;top:780px;width:1028px;height:20px">
<span style="left:2px;letter-spacing:-.33px">Line:</span><span style="left:35px;letter-spacing:-.57px">602</span><span style="left:99px;letter-spacing:-.11px">Col:</span><span style="left:131.500px;letter-spacing:-1.100px">51</span><span style="left:189px;letter-spacing:-.76px">Sel:</span><span style="left:222px">0</span><span style="left:273px;letter-spacing:-.31px">Lines:</span><span style="left:308px;letter-spacing:-.34px">1173</span><span style="left:378px;letter-spacing:-.12px">Length:</span><span style="left:421px;letter-spacing:-.82px">34888</span><i style="left:479px"></i><span style="left:483px">Insert</span><i style="left:559px"></i><span style="left:564px;letter-spacing:.33px">Modified</span>
<svg class="a" style="right:2px;bottom:2px" width="11" height="11" viewBox="0 0 11 11"><g fill="#c4c0be"><rect x="8" y="0" width="2" height="2"/><rect x="4" y="4" width="2" height="2"/><rect x="8" y="4" width="2" height="2"/><rect x="0" y="8" width="2" height="2"/><rect x="4" y="8" width="2" height="2"/><rect x="8" y="8" width="2" height="2"/></g><g fill="#fff"><rect x="9" y="1" width="1" height="1"/><rect x="5" y="5" width="1" height="1"/><rect x="9" y="5" width="1" height="1"/><rect x="1" y="9" width="1" height="1"/><rect x="5" y="9" width="1" height="1"/><rect x="9" y="9" width="1" height="1"/></g></svg>
</div>

</div>
<!-- frame sides -->
<div id="fl" class="a"></div><div id="fr" class="a"></div><div id="fbm" class="a"></div>
<div class="a" style="left:0;top:0;width:1044px;height:1px;background:#4a4e54"></div>
<div class="a" style="left:6px;top:1px;width:1032px;height:1px;background:#f4f8fc;opacity:.85"></div>
<div id="edgeL" class="a" style="left:0;top:5px;width:1px;height:25px;background:#50545a"></div><div class="a" style="left:1px;top:3px;width:1px;height:27px;background:rgba(255,255,255,.6)"></div><div class="a" style="left:1043px;top:5px;width:1px;height:25px;background:#50545a"></div><div class="a" style="left:1042px;top:3px;width:1px;height:27px;background:rgba(255,255,255,.5)"></div>
<!-- inner border -->
<div class="a" style="left:7px;top:29px;width:1030px;height:802px;border:1px solid #646a72;border-bottom-color:#5a4a42;pointer-events:none"></div>
<!-- app icon -->
<svg class="a" style="left:8px;top:7px" width="16" height="16" viewBox="0 0 16 16"><defs><linearGradient id="ai1" x1="0" y1="0" x2="0" y2="1"><stop offset="0" stop-color="#8a88e0"/><stop offset="1" stop-color="#3c3ca0"/></linearGradient><linearGradient id="ai2" x1="0" y1="0" x2="0" y2="1"><stop offset="0" stop-color="#1060d8"/><stop offset="1" stop-color="#2890f8"/></linearGradient></defs><rect x="0" y="0" width="16" height="16" fill="#0a0a40"/><rect x="1" y="1" width="14" height="7" fill="url(#ai1)"/><rect x="1" y="8" width="14" height="7" fill="url(#ai2)"/><g fill="#fff"><path d="M2 3h2.500l1.500 1.500v1l-1.500 1.500h-2.500z M3.200 4v2l1.600-1z" fill-rule="evenodd"/><rect x="6.800" y="3" width="1.200" height="4"/><rect x="6.800" y="3" width="2.600" height="1"/><rect x="6.800" y="4.600" width="2.200" height=".9"/><rect x="6.800" y="6.100" width="2.600" height=".9"/><path d="M10 3h1.200l.9 2.600l.9-2.600h1.200l-1.500 4h-1.200z"/></g><g fill="#0a48b0"><path d="M5 9.500h-2.500v4h2.500v-1h-1.500v-2h1.500z"/><rect x="6" y="11" width="3.500" height="1"/><rect x="7.200" y="9.800" width="1" height="3.400"/><rect x="10.500" y="11" width="3.500" height="1"/><rect x="11.700" y="9.800" width="1" height="3.400"/></g></svg>
<!-- caption buttons -->
<div id="capbtn" class="a"><i style="left:28px"></i><i style="left:55px"></i>
<svg class="a" style="left:0;top:0" width="102" height="19" viewBox="0 0 102 19"><g fill="#fdfdfd" stroke="#5a626c" stroke-width="1"><rect x="9.500" y="10.500" width="11" height="4" rx="1"/><path d="M35.500 5.500h12v9h-12z M38.500 8.500v3h6v-3z" fill-rule="evenodd"/><path d="M74.500 5.500h3.600l1.600 2.300l1.600-2.300h3.600l-3.400 4.500l3.400 4.500h-3.600l-1.600-2.300l-1.600 2.300h-3.600l3.400-4.500z" stroke-linejoin="round"/></g></svg>
</div>

</div>
</body></html>
